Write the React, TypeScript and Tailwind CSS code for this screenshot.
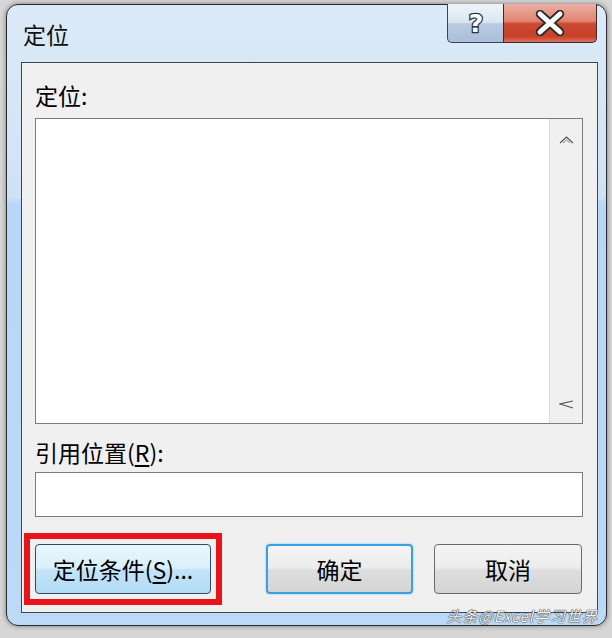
import React from "react";

const CJK = "font-['Microsoft_YaHei','Noto_Sans_CJK_SC','Noto_Sans',sans-serif]";

function UpArrow() {
  return (
    <svg width="15" height="8" viewBox="0 0 15 8">
      <polyline points="1,7 7.5,1 14,7" fill="none" stroke="#555" strokeWidth="1.2" />
      <polyline points="4,7 7.5,4 11,7" fill="none" stroke="#888" strokeWidth="1" />
    </svg>
  );
}

function DownArrow() {
  return (
    <svg width="15" height="9" viewBox="0 0 15 9">
      <polyline points="14,1 1,4 14,8" fill="none" stroke="#555" strokeWidth="1.2" />
    </svg>
  );
}

export default function App() {
  return (
    <div className={`w-[612px] h-[638px] bg-[#d6d6d6] pl-[6px] pt-[4px] overflow-hidden ${CJK}`}>
      <div className="relative w-[601px] h-[622px] rounded-[12px] border border-[#2a2a2a] shadow-[0_0_5px_rgba(0,0,0,0.45)] bg-[linear-gradient(to_bottom,#dceaf8_0%,#cfe2f5_31%,#b8d7f6_32%,#bcd9f7_100%)] flex flex-col">
        {/* title bar */}
        <div className="h-[57px] flex items-start justify-between">
          <div className="pl-[16px] pt-[14px] text-[23px] leading-[30px] text-[#111]">定位</div>
          <div className="flex -mt-[1px] mr-[9px] h-[39px]">
            <div className="w-[56px] h-full border-l border-b border-[#3a4656] rounded-bl-[5px] bg-[linear-gradient(to_bottom,#eef3f9_0%,#dbe6f1_48%,#b9cbe0_52%,#a9bfd8_100%)] flex items-center justify-center">
              <svg width="24" height="30" viewBox="0 0 24 30">
                <text x="12" y="24" textAnchor="middle" fontSize="25" fontWeight="700" fontFamily="'DejaVu Sans', sans-serif" fill="#fff" stroke="#2d3640" strokeWidth="2.6" paintOrder="stroke">?</text>
              </svg>
            </div>
            <div className="w-[94px] h-full border-l border-r border-b border-[#3a2a28] rounded-br-[5px] bg-[linear-gradient(to_bottom,#ecb0a4_0%,#e08572_45%,#cc4a32_52%,#c8402a_85%,#d9715e_100%)] flex items-center justify-center">
              <svg width="34" height="26" viewBox="0 0 34 26">
                <path d="M7 4 L27 22 M27 4 L7 22" stroke="#2b2b2b" strokeWidth="8.5" strokeLinecap="round" />
                <path d="M7 4 L27 22 M27 4 L7 22" stroke="#fff" strokeWidth="5" strokeLinecap="round" />
              </svg>
            </div>
          </div>
        </div>

        {/* client area */}
        <div className="ml-[14px] w-[577px] h-[551px] border border-[#3e4650] bg-[#f0f0f0] flex flex-col pl-[13px]">
          <div className="mt-[17px] h-[30px] text-[23px] leading-[30px] text-black">定位:</div>
          <div className="mt-[8px] w-[548px] h-[306px] border border-[#7c7c7c] bg-white flex">
            <div className="flex-1" />
            <div className="w-[33px] h-full bg-[#f0f0f0] border-l border-[#dcdcdc] flex flex-col justify-between">
              <div className="h-[42px] flex items-center justify-center">
                <UpArrow />
              </div>
              <div className="h-[38px] flex items-center justify-center">
                <DownArrow />
              </div>
            </div>
          </div>
          <div className="mt-[13px] h-[30px] text-[23px] leading-[30px] text-black">
            引用位置(<span className="underline underline-offset-[3px]">R</span>):
          </div>
          <div className="mt-[5px] w-[548px] h-[45px] border border-[#7c7c7c] bg-white" />

          <div className="mt-[16px] -ml-[11px] flex items-center">
            <div className="border-[6px] border-[#e8141a] p-[5px]">
              <div className="w-[176px] h-[50px] rounded-[4px] border border-[#2f4a66] bg-[linear-gradient(to_bottom,#eaf6fd_0%,#d9f0fc_48%,#c2e4f8_52%,#b2dbf4_100%)] flex items-center justify-center text-[23px] leading-[30px] text-black">
                定位条件(<span className="underline underline-offset-[3px]">S</span>)...
              </div>
            </div>
            <div className="ml-[44px] w-[147px] h-[50px] rounded-[4px] border-2 border-[#3c9fe2] shadow-[0_0_2px_#6ec0f5] bg-[linear-gradient(to_bottom,#f4f4f4_0%,#ececec_48%,#dedede_52%,#d4d4d4_100%)] flex items-center justify-center text-[23px] leading-[30px] text-black">
              确定
            </div>
            <div className="ml-[21px] w-[148px] h-[50px] rounded-[4px] border border-[#6a6a6a] bg-[linear-gradient(to_bottom,#f4f4f4_0%,#ececec_48%,#dedede_52%,#d4d4d4_100%)] flex items-center justify-center text-[23px] leading-[30px] text-black">
              取消
            </div>
          </div>
        </div>

        {/* watermark */}
        <div className="absolute right-[8px] bottom-[1px] text-[15px] leading-[16px] tracking-[1px] italic text-[#f2f2f2] [text-shadow:0_0_1px_#444,0_0_1px_#444,0_0_1px_#444]">
          头条@Excel学习世界
        </div>
      </div>
    </div>
  );
}
